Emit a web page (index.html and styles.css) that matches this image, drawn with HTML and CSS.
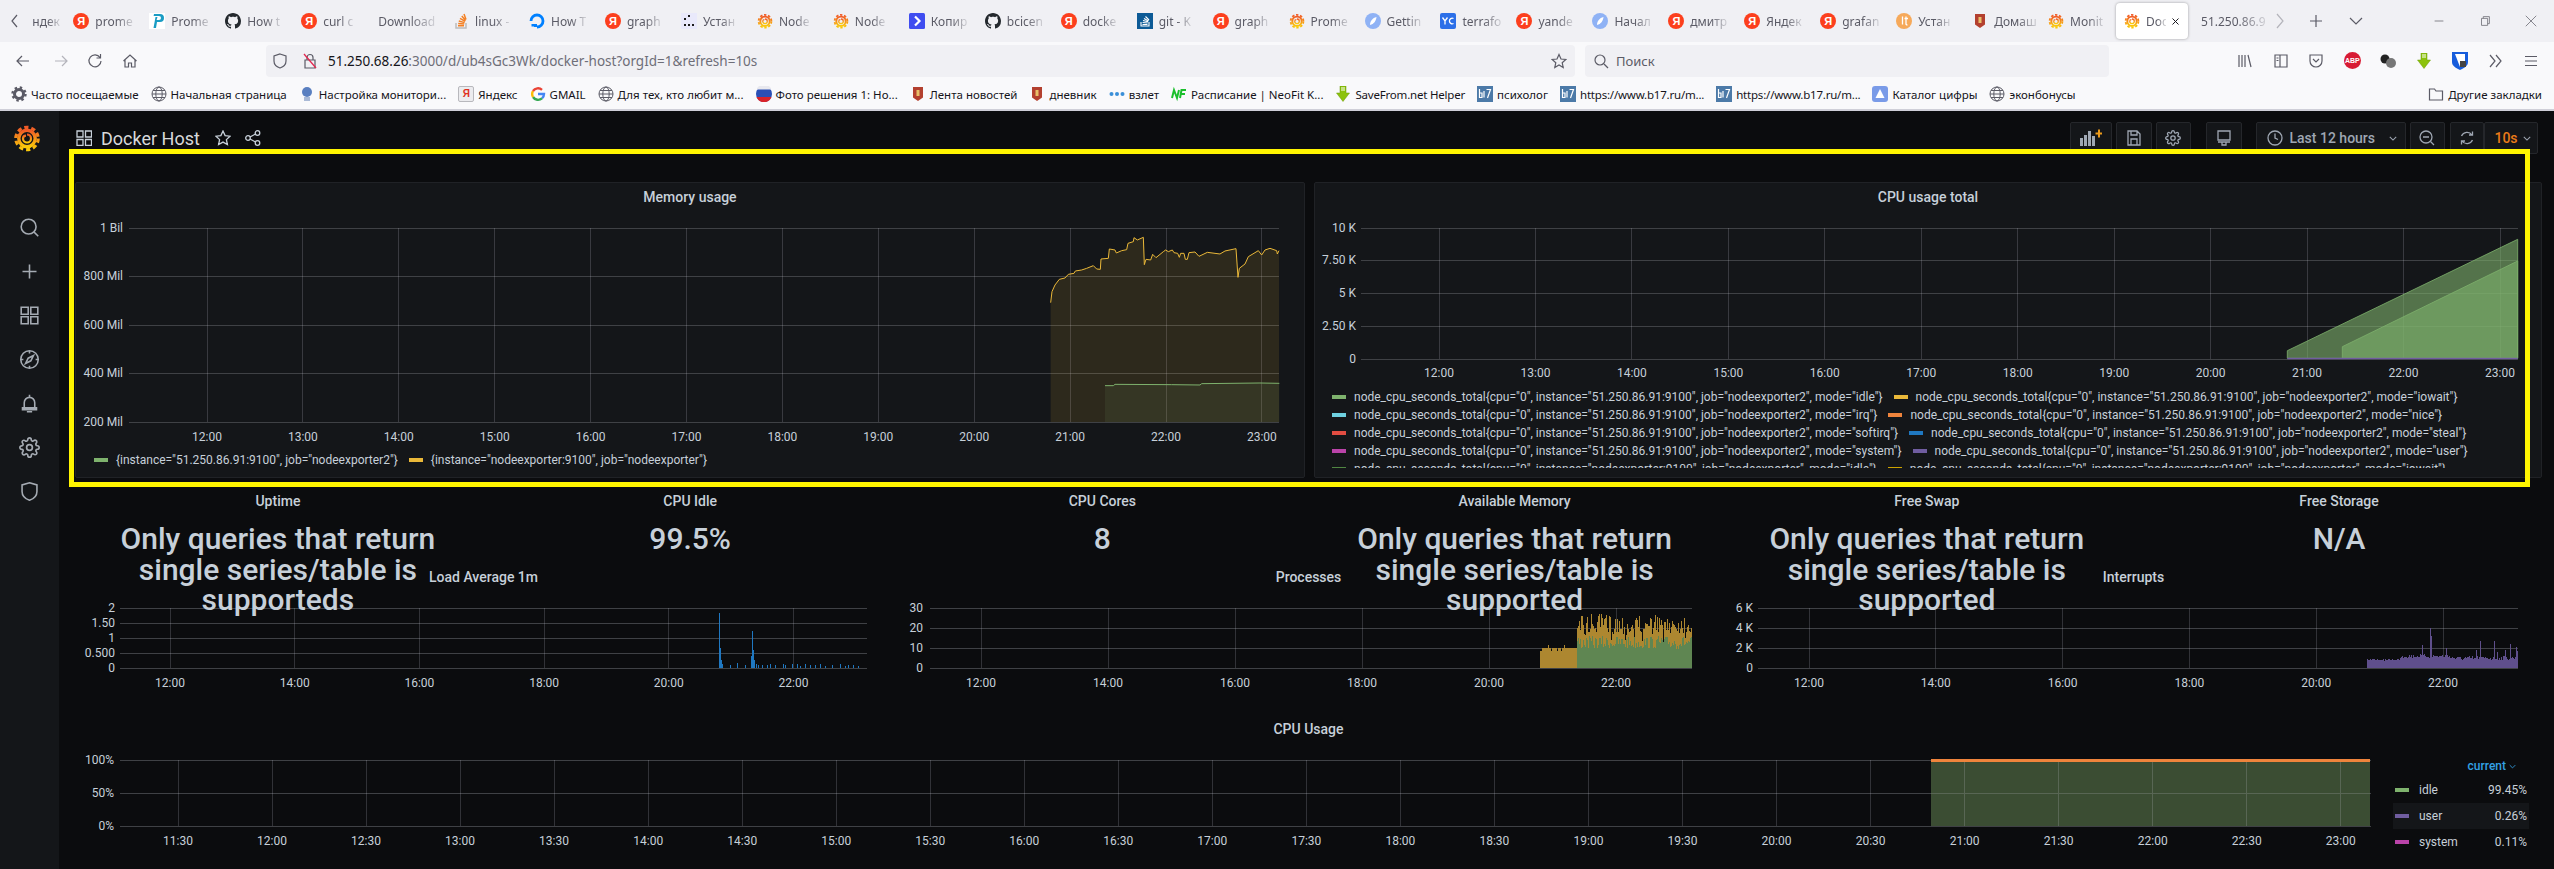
FILE: index.html
```html
<!DOCTYPE html>
<html lang="ru">
<head>
<meta charset="utf-8">
<title>Docker Host - Grafana</title>
<link rel="stylesheet" href="styles.css">
</head>
<body>
<svg class="defs" aria-hidden="true">
  <defs>
    <linearGradient id="gf" x1="0" y1="1" x2="0" y2="0"><stop offset="0" stop-color="#fbca0a"/><stop offset="1" stop-color="#f05a28"/></linearGradient>
    <symbol id="i-graf" viewBox="0 0 28 28">
      <circle cx="14" cy="14.5" r="11.2" fill="none" stroke="url(#gf)" stroke-width="3.2" stroke-dasharray="4.2 2.9"/>
      <circle cx="14" cy="14.5" r="8.2" fill="none" stroke="url(#gf)" stroke-width="3.4"/>
      <path d="M14 10.5a4 4 0 1 1-4 4.2 3 3 0 0 1 3-3" fill="none" stroke="url(#gf)" stroke-width="2.2"/>
    </symbol>
    <symbol id="i-gh" viewBox="0 0 16 16"><path fill="#24292e" d="M8 0C3.58 0 0 3.58 0 8c0 3.54 2.29 6.53 5.47 7.59.4.07.55-.17.55-.38 0-.19-.01-.82-.01-1.49-2.01.37-2.53-.49-2.69-.94-.09-.23-.48-.94-.82-1.13-.28-.15-.68-.52-.01-.53.63-.01 1.08.58 1.23.82.72 1.21 1.87.87 2.33.66.07-.52.28-.87.51-1.07-1.78-.2-3.64-.89-3.64-3.95 0-.87.31-1.59.82-2.15-.08-.2-.36-1.02.08-2.12 0 0 .67-.21 2.2.82.64-.18 1.32-.27 2-.27.68 0 1.36.09 2 .27 1.53-1.04 2.2-.82 2.2-.82.44 1.1.16 1.92.08 2.12.51.56.82 1.27.82 2.15 0 3.07-1.87 3.75-3.65 3.95.29.25.54.73.54 1.48 0 1.07-.01 1.93-.01 2.2 0 .21.15.46.55.38A8.013 8.013 0 0016 8c0-4.42-3.58-8-8-8z"/></symbol>
    <symbol id="i-pp" viewBox="0 0 16 16"><rect width="16" height="16" fill="#fff"/><path fill="#1a9cc4" d="M5 1h6a3.5 3.5 0 0 1 0 8H8l-1 6H4.500l2-11h2L7.600 7H10a1.500 1.500 0 0 0 0-4H4.600z"/></symbol>
    <symbol id="i-so" viewBox="0 0 16 16"><path fill="none" stroke="#bcbbbb" stroke-width="1.500" d="M3 10v5h10v-5"/><path fill="none" stroke="#f48024" stroke-width="1.500" d="M5 12.800h6M5.200 10.500l6 .6M5.800 8l5.800 1.600M7 5.400l5.200 3M8.800 3l3.800 4.400M11 1l2 5.400"/></symbol>
    <symbol id="i-sob" viewBox="0 0 16 16"><rect width="16" height="16" fill="#0c5a96"/><path fill="none" stroke="#fff" stroke-width="1.100" d="M4 9v4h8V9M5.500 11.500h5M5.600 9.500l5 .5M6 7.500l5 1.300M7 5.500l4.500 2.500M8.500 3.500l3.500 3.500"/></symbol>
    <symbol id="i-do" viewBox="0 0 16 16"><path fill="none" stroke="#0080ff" stroke-width="2.800" d="M8 14A6 6 0 1 0 2 8"/><path fill="#0080ff" d="M5 11h3v3H5zM2.500 11H5v2.500H2.500z"/></symbol>
    <symbol id="i-dots" viewBox="0 0 16 16"><rect width="16" height="16" fill="#e9e9fb"/><path fill="#1a1a1a" d="M3 5h2v2H3zM3 11h2v2H3zM7 11h2v2H7zM11 11h2v2h-2zM7 2h2v2H7z"/></symbol>
    <symbol id="i-kop" viewBox="0 0 16 16"><rect width="16" height="16" rx="1.500" fill="#3f4df0"/><path fill="none" stroke="#fff" stroke-width="2.200" d="M6 3.500L10.500 8 6 12.500"/></symbol>
    <symbol id="i-drop" viewBox="0 0 16 16"><circle cx="8" cy="8" r="8" fill="#8fb2f5"/><path fill="#fff" d="M5 12c0-4 2.500-7 6.500-8-.5 4-2.500 7-6.500 8z"/></symbol>
    <symbol id="i-yc" viewBox="0 0 16 16"><rect width="16" height="16" rx="2" fill="#2c6fe8"/><path fill="none" stroke="#fff" stroke-width="1.300" d="M2.500 4.500L5 8l2.500-3.500M5 8v3.500M13.500 5.500a2.800 2.800 0 1 0 0 5"/></symbol>
    <symbol id="i-lt" viewBox="0 0 16 16"><circle cx="8" cy="8" r="8" fill="#f6a95a"/><path fill="none" stroke="#fff" stroke-width="1.300" d="M6.500 3.500v8M8.500 5.500h3.500M10 3.500v7.500c0 .5.5 1 1.500.8"/></symbol>
    <symbol id="i-msk" viewBox="0 0 16 16"><path fill="#b3402f" d="M3 1h10v10.500L8 15l-5-3.500z"/><path fill="#e8c06a" d="M6.500 4h3v6h-3z"/></symbol>
    <symbol id="i-globe" viewBox="0 0 16 16"><g fill="none" stroke="#5b5b66" stroke-width="1"><circle cx="8" cy="8" r="7"/><ellipse cx="8" cy="8" rx="3.200" ry="7"/><path d="M1 8h14M2 4.500h12M2 11.500h12"/></g></symbol>
    <symbol id="i-b17" viewBox="0 0 16 16"><rect width="16" height="16" fill="#4c7aa8"/><path fill="none" stroke="#fff" stroke-width="1.200" d="M2.500 3v8.500h2.500V7H2.500M7 5v6.500M9.500 3.500H13.500L10.500 12"/></symbol>
    <symbol id="i-dn" viewBox="0 0 16 16"><path fill="#8cc20c" stroke="#6a9a06" stroke-width=".5" d="M5 0h6v7h3.500L8 15.500 1.500 7H5z"/><path fill="#fff" d="M6.500 1h1v4h-1zM8.500 1h1v4h-1z"/></symbol>
    <symbol id="i-fgear" viewBox="0 0 16 16"><circle cx="8" cy="8" r="4.500" fill="none" stroke="#5b5b66" stroke-width="3"/><circle cx="8" cy="8" r="6.500" fill="none" stroke="#5b5b66" stroke-width="2.400" stroke-dasharray="2.400 2.700"/></symbol>
    <symbol id="i-gear" viewBox="0 0 24 24"><g fill="none" stroke="currentColor" stroke-width="1.900" stroke-linejoin="round"><circle cx="12" cy="12" r="3.300"/><path d="M19.400 15a1.650 1.650 0 0 0 .33 1.820l.06.06a2 2 0 0 1 0 2.830 2 2 0 0 1-2.830 0l-.06-.06a1.650 1.650 0 0 0-1.820-.33 1.650 1.650 0 0 0-1 1.510V21a2 2 0 0 1-2 2 2 2 0 0 1-2-2v-.09A1.650 1.650 0 0 0 9 19.400a1.650 1.650 0 0 0-1.820.33l-.06.06a2 2 0 0 1-2.830 0 2 2 0 0 1 0-2.830l.06-.06a1.650 1.650 0 0 0 .33-1.820 1.650 1.650 0 0 0-1.510-1H3a2 2 0 0 1-2-2 2 2 0 0 1 2-2h.09A1.650 1.650 0 0 0 4.600 9a1.650 1.650 0 0 0-.33-1.820l-.06-.06a2 2 0 0 1 0-2.830 2 2 0 0 1 2.830 0l.06.06a1.650 1.650 0 0 0 1.820.33H9a1.650 1.650 0 0 0 1-1.510V3a2 2 0 0 1 2-2 2 2 0 0 1 2 2v.09a1.650 1.650 0 0 0 1 1.510 1.650 1.650 0 0 0 1.820-.33l.06-.06a2 2 0 0 1 2.830 0 2 2 0 0 1 0 2.830l-.06.06a1.650 1.650 0 0 0-.33 1.820V9a1.650 1.650 0 0 0 1.510 1H21a2 2 0 0 1 2 2 2 2 0 0 1-2 2h-.09a1.650 1.650 0 0 0-1.510 1z"/></g></symbol>
  </defs>
</svg>

<header class="tabbar">
  <span class="tab-back"><svg class="chrome-ico" viewBox="0 0 16 16"><path d="M10 2L5 8l5 6"/></svg></span>
  <div class="tab tab-first"><span class="tab-label">ндек</span></div>
  <div class="tab"><span class="fav fav-ya">Я</span><span class="tab-label">prome</span></div>
  <div class="tab"><svg class="fav"><use href="#i-pp"/></svg><span class="tab-label">Prome</span></div>
  <div class="tab"><svg class="fav"><use href="#i-gh"/></svg><span class="tab-label">How t</span></div>
  <div class="tab"><span class="fav fav-ya">Я</span><span class="tab-label">curl c</span></div>
  <div class="tab tab-noicon"><span class="tab-label">Download</span></div>
  <div class="tab"><svg class="fav"><use href="#i-so"/></svg><span class="tab-label">linux -</span></div>
  <div class="tab"><svg class="fav"><use href="#i-do"/></svg><span class="tab-label">How T</span></div>
  <div class="tab"><span class="fav fav-ya">Я</span><span class="tab-label">graph</span></div>
  <div class="tab"><svg class="fav"><use href="#i-dots"/></svg><span class="tab-label">Устан</span></div>
  <div class="tab"><svg class="fav"><use href="#i-graf"/></svg><span class="tab-label">Node</span></div>
  <div class="tab"><svg class="fav"><use href="#i-graf"/></svg><span class="tab-label">Node</span></div>
  <div class="tab"><svg class="fav"><use href="#i-kop"/></svg><span class="tab-label">Копир</span></div>
  <div class="tab"><svg class="fav"><use href="#i-gh"/></svg><span class="tab-label">bcicen</span></div>
  <div class="tab"><span class="fav fav-ya">Я</span><span class="tab-label">docke</span></div>
  <div class="tab"><svg class="fav"><use href="#i-sob"/></svg><span class="tab-label">git - K</span></div>
  <div class="tab"><span class="fav fav-ya">Я</span><span class="tab-label">graph</span></div>
  <div class="tab"><svg class="fav"><use href="#i-graf"/></svg><span class="tab-label">Prome</span></div>
  <div class="tab"><svg class="fav"><use href="#i-drop"/></svg><span class="tab-label">Gettin</span></div>
  <div class="tab"><svg class="fav"><use href="#i-yc"/></svg><span class="tab-label">terrafo</span></div>
  <div class="tab"><span class="fav fav-ya">Я</span><span class="tab-label">yande</span></div>
  <div class="tab"><svg class="fav"><use href="#i-drop"/></svg><span class="tab-label">Начал</span></div>
  <div class="tab"><span class="fav fav-ya">Я</span><span class="tab-label">дмитр</span></div>
  <div class="tab"><span class="fav fav-ya">Я</span><span class="tab-label">Яндек</span></div>
  <div class="tab"><span class="fav fav-ya">Я</span><span class="tab-label">grafan</span></div>
  <div class="tab"><svg class="fav"><use href="#i-lt"/></svg><span class="tab-label">Устан</span></div>
  <div class="tab"><svg class="fav"><use href="#i-msk"/></svg><span class="tab-label">Домаш</span></div>
  <div class="tab"><svg class="fav"><use href="#i-graf"/></svg><span class="tab-label">Monit</span></div>
  <div class="tab tab-active"><svg class="fav"><use href="#i-graf"/></svg><span class="tab-label tab-label-short">Doc</span><svg class="tab-close" viewBox="0 0 12 12"><path d="M2 2l8 8M10 2l-8 8"/></svg></div>
  <div class="tab tab-noicon tab-last"><span class="tab-label">51.250.86.9</span></div>
  <span class="tab-ctl tab-ctl-a"><svg class="chrome-ico chrome-faint" viewBox="0 0 16 16"><path d="M5 1l6 7-6 7"/></svg></span>
  <span class="tab-ctl tab-ctl-b"><svg class="chrome-ico" viewBox="0 0 16 16"><path d="M8 2v12M2 8h12"/></svg></span>
  <span class="tab-ctl tab-ctl-c"><svg class="chrome-ico" viewBox="0 0 16 16"><path d="M2 5l6 6 6-6"/></svg></span>
  <span class="win-ctl win-first"><svg class="chrome-ico chrome-win" viewBox="0 0 16 16"><path d="M3 8h10"/></svg></span>
  <span class="win-ctl"><svg class="chrome-ico chrome-win" viewBox="0 0 16 16"><path d="M4 5h7v8H4zM6 5V3h7v8h-2"/></svg></span>
  <span class="win-ctl"><svg class="chrome-ico chrome-win" viewBox="0 0 16 16"><path d="M2 2l12 12M14 2L2 14"/></svg></span>
</header>

<nav class="navbar">
  <svg class="chrome-ico nb-back" viewBox="0 0 16 16"><path d="M14 8H2M7 3L2 8l5 5"/></svg>
  <svg class="chrome-ico chrome-faint nb-fwd" viewBox="0 0 16 16"><path d="M2 8h12M9 3l5 5-5 5"/></svg>
  <svg class="chrome-ico nb-reload" viewBox="0 0 16 16"><path d="M13 4.500A6 6 0 1 0 14 8M13.500 1v4h-4"/></svg>
  <svg class="chrome-ico nb-home" viewBox="0 0 16 16"><path d="M1.500 8L8 2l6.500 6M3 7v7h3.500v-4h3v4H13V7"/></svg>
  <div class="urlbar">
    <svg class="chrome-ico url-shield" viewBox="0 0 16 16"><path d="M8 1l6 2v5c0 3.500-3 6-6 7-3-1-6-3.500-6-7V3z"/></svg>
    <svg class="url-lock" viewBox="0 0 16 16"><path fill="none" stroke="#5b5b66" stroke-width="1.200" d="M3 7h10v8H3zM5 7V4.500a3 3 0 0 1 6 0V7"/><path stroke="#e22850" stroke-width="1.300" d="M2 1l12 14"/></svg>
    <span class="url-text"><span class="url-host">51.250.68.26</span>:3000/d/ub4sGc3Wk/docker-host?orgId=1&amp;refresh=10s</span>
    <svg class="chrome-ico url-star" viewBox="0 0 16 16"><path d="M8 1.500l2 4.500 4.800.5-3.600 3.200 1 4.800L8 12l-4.200 2.500 1-4.800L1.200 6.500 6 6z"/></svg>
  </div>
  <div class="searchbar">
    <svg class="chrome-ico" viewBox="0 0 16 16"><circle cx="7" cy="7" r="5"/><path d="M11 11l4 4"/></svg>
    <span>Поиск</span>
  </div>
  <div class="nav-tools">
    <span class="nav-tool"><svg class="chrome-ico" viewBox="0 0 16 16"><path d="M2 2v12M5 2v12M8 2v12M11 2l3 12"/></svg></span>
    <span class="nav-tool"><svg class="chrome-ico" viewBox="0 0 16 16"><path d="M2 2h12v12H2zM7 2v12M3.500 5h2M3.500 7.500h2"/></svg></span>
    <span class="nav-tool"><svg class="chrome-ico" viewBox="0 0 16 16"><path d="M2 2h12v6a6 6 0 0 1-12 0zM5 6l3 3 3-3"/></svg></span>
    <span class="nav-tool"><span class="abp">ABP</span></span>
    <span class="nav-tool"><svg width="18" height="18" viewBox="0 0 18 18"><circle cx="6" cy="7" r="4.500" fill="#222"/><circle cx="12" cy="11" r="5" fill="#777"/></svg></span>
    <span class="nav-tool"><svg class="fav"><use href="#i-dn"/></svg></span>
    <span class="nav-tool"><svg width="16" height="18" viewBox="0 0 16 18"><path fill="#175ddc" d="M0 0h16v10c0 4-4 6-8 8-4-2-8-4-8-8z"/><path fill="#fff" d="M3 2h10v8c0 2-2.500 3.500-5 5z"/><rect x="8" y="9" width="6" height="6" fill="#444"/></svg></span>
    <span class="nav-tool"><svg class="chrome-ico" viewBox="0 0 16 16"><path d="M3 2l5 6-5 6M9 2l5 6-5 6"/></svg></span>
    <span class="nav-tool"><svg class="chrome-ico" viewBox="0 0 16 16"><path d="M2 3.500h12M2 8h12M2 12.500h12"/></svg></span>
  </div>
</nav>

<div class="bookbar">
  <a class="bm"><svg class="fav"><use href="#i-fgear"/></svg>Часто посещаемые</a>
  <a class="bm"><svg class="fav"><use href="#i-globe"/></svg>Начальная страница</a>
  <a class="bm"><svg class="fav" viewBox="0 0 16 16"><circle cx="8" cy="6" r="5" fill="#5a7fc0"/><path fill="#a9b9d6" d="M5 11h6v4H5z"/></svg>Настройка монитори...</a>
  <a class="bm"><span class="fav fav-yatag">Я</span>Яндекс</a>
  <a class="bm"><svg class="fav" viewBox="0 0 16 16"><path fill="none" stroke="#4285f4" stroke-width="2.400" d="M8 8h6a6 6 0 0 1-2 4.400"/><path fill="none" stroke="#34a853" stroke-width="2.400" d="M12 12.400A6 6 0 0 1 3 11"/><path fill="none" stroke="#fbbc05" stroke-width="2.400" d="M3 11a6 6 0 0 1 0-6"/><path fill="none" stroke="#ea4335" stroke-width="2.400" d="M3 5a6 6 0 0 1 9-1.200"/></svg>GMAIL</a>
  <a class="bm"><svg class="fav"><use href="#i-globe"/></svg>Для тех, кто любит м...</a>
  <a class="bm"><svg class="fav" viewBox="0 0 16 16"><circle cx="8" cy="8" r="8" fill="#2b4fb5"/><path fill="#e8e8ee" d="M1 3.500h14v-1a8 8 0 0 0-14 0z"/><path fill="#d8232a" d="M.500 11h15a8 8 0 0 1-15 0z"/></svg>Фото решения 1: Но...</a>
  <a class="bm"><svg class="fav"><use href="#i-msk"/></svg>Лента новостей</a>
  <a class="bm"><svg class="fav"><use href="#i-msk"/></svg>дневник</a>
  <a class="bm"><svg class="fav" viewBox="0 0 16 16"><g fill="#3a8fd8"><circle cx="2.500" cy="8" r="2"/><circle cx="8" cy="8" r="2"/><circle cx="13.500" cy="8" r="2"/></g></svg>взлет</a>
  <a class="bm"><svg class="fav" viewBox="0 0 16 16"><path fill="none" stroke="#1bbf2c" stroke-width="2" d="M1 12l2-8 3 8 2-8M9 12l1.500-8H15M10 8h4"/></svg>Расписание | NeoFit K...</a>
  <a class="bm bm-tight"><svg class="fav"><use href="#i-dn"/></svg>SaveFrom.net Helper</a>
  <a class="bm"><svg class="fav"><use href="#i-b17"/></svg>психолог</a>
  <a class="bm bm-tight"><svg class="fav"><use href="#i-b17"/></svg>https://www.b17.ru/m...</a>
  <a class="bm bm-tight"><svg class="fav"><use href="#i-b17"/></svg>https://www.b17.ru/m...</a>
  <a class="bm"><svg class="fav" viewBox="0 0 16 16"><rect width="16" height="16" rx="3" fill="#7a9be8"/><path fill="#fff" d="M8 3l4.500 9h-9z"/></svg>Каталог цифры</a>
  <a class="bm"><svg class="fav"><use href="#i-globe"/></svg>эконбонусы</a>
  <a class="bm bm-other"><svg class="chrome-ico" viewBox="0 0 16 16"><path d="M1.500 3h5l1.500 2h6.500v9h-13z"/></svg>Другие закладки</a>
</div>

<div class="app">
  <aside class="side">
    <svg class="side-logo"><use href="#i-graf"/></svg>
    <span class="side-item"><svg class="side-ico" viewBox="0 0 24 24"><circle cx="11" cy="11" r="8.500"/><path d="M17 17l5 5"/></svg></span>
    <span class="side-item"><svg class="side-ico" viewBox="0 0 24 24"><path d="M12 4v16M4 12h16"/></svg></span>
    <span class="side-item"><svg class="side-ico" viewBox="0 0 24 24"><path d="M2.500 2.500h8v8h-8zM13.500 2.500h8v8h-8zM2.500 13.500h8v8h-8zM13.500 13.500h8v8h-8z"/></svg></span>
    <span class="side-item"><svg class="side-ico" viewBox="0 0 24 24"><circle cx="12" cy="12" r="10"/><path d="M12 2v3M12 19v3M2 12h3M19 12h3M16.500 7.500l-3 6-6 3 3-6z"/></svg></span>
    <span class="side-item"><svg class="side-ico" viewBox="0 0 24 24"><path d="M12 2v2.500M6 17v-6a6 6 0 0 1 12 0v6M4 17h16v2H4zM9 21.500h6"/></svg></span>
    <span class="side-item"><svg class="side-ico"><use href="#i-gear"/></svg></span>
    <span class="side-item"><svg class="side-ico" viewBox="0 0 24 24"><path d="M12 2l8.500 2.500V12c0 5-4 8.500-8.500 10-4.500-1.500-8.500-5-8.500-10V4.500z"/></svg></span>
  </aside>

  <main class="main">
    <div class="topbar">
      <div class="dash-title">
        <svg class="title-ico" viewBox="0 0 16 16"><path d="M1 1h6v6H1zM9.500 1h6v6h-6zM1 9.500h6v6H1zM9.500 9.500h6v6h-6z"/></svg>
        <span class="title-text">Docker Host</span>
        <svg class="title-ico title-star" viewBox="0 0 16 16"><path d="M8 1l2.100 4.600 4.900.6-3.600 3.400 1 4.900L8 12.100l-4.400 2.400 1-4.900L1 6.200l4.900-.6z"/></svg>
        <svg class="title-ico title-share" viewBox="0 0 16 16"><circle cx="12.500" cy="3" r="2.300"/><circle cx="12.500" cy="13" r="2.300"/><circle cx="3" cy="8" r="2.300"/><path d="M5 7l5.500-3M5 9l5.500 3"/></svg>
      </div>
      <div class="toolbar">
        <span class="tbtn tbtn-add"><svg width="22" height="18" viewBox="0 0 22 18"><path fill="#9fa7b3" d="M0 9h3v8H0zM4 6h3v11H4zM8 2h3v15H8zM12 7h3v10h-3z"/><path fill="#eb9a1a" d="M15.500 3.500h2.500V0.500h2v3h2.500v2h-2.500v3h-2v-3h-2.500z"/></svg></span>
        <span class="tbtn"><svg class="tb-ico" viewBox="0 0 16 16"><path d="M2 1h9l3 3v11H2zM5 1v4h6V1M5 15V9h6v6"/></svg></span>
        <span class="tbtn tbtn-last"><svg class="tb-ico"><use href="#i-gear"/></svg></span>
        <span class="tbtn tbtn-last"><svg class="tb-ico" viewBox="0 0 16 16"><path d="M2 1h12v9H2zM2 12h12M6 12v3h4v-3"/></svg></span>
        <span class="tbtn tbtn-time"><svg class="tb-ico" viewBox="0 0 16 16"><circle cx="8" cy="8" r="7"/><path d="M8 3.500V8l3 1.500"/></svg><span class="time-text">Last 12 hours</span><svg class="tb-chev" viewBox="0 0 10 6"><path d="M1 1l4 4 4-4"/></svg></span>
        <span class="tbtn"><svg class="tb-ico" viewBox="0 0 16 16"><circle cx="7" cy="7" r="6"/><path d="M4 7h6M11.500 11.500l3.500 3.500"/></svg></span>
        <span class="tgroup">
          <span class="tbtn tbtn-ref"><svg class="tb-ico" viewBox="0 0 16 16"><path d="M13 5A6 6 0 0 0 2.500 6M3 11a6 6 0 0 0 10.500-1M13.500 1.500V5H10M2.500 14.500V11H6"/></svg></span>
          <span class="tbtn tbtn-int"><span class="int-text">10s</span><svg class="tb-chev" viewBox="0 0 10 6"><path d="M1 1l4 4 4-4"/></svg></span>
        </span>
      </div>
    </div>

    <section class="row row-top">
      <article class="panel">
        <h2 class="ptitle">Memory usage</h2>
        <svg class="plot plot-mem" viewBox="75 211 1230 236">
          <path class="grid-h" d="M129 228H1279M129 276H1279M129 325H1279M129 373H1279M129 422H1279"/>
          <path class="grid-v" d="M207 228V422M302.900 228V422M398.800 228V422M494.700 228V422M590.600 228V422M686.500 228V422M782.400 228V422M878.300 228V422M974.200 228V422M1070.100 228V422M1166 228V422M1261.900 228V422"/>
          <g transform="translate(1000 220) scale(.33333)">
            <path fill="#eab839" fill-opacity=".12" d="M152 248L156 215 165 195 178 178 195 174 205 163 222 160 226 153 245 150 260 145 280 137 290 147 301 148 303 117 325 115 328 87 345 90 349 99 365 92 380 89 384 70 400 65 402 53 412 60 430 52 433 134 438 118 452 120 458 103 468 113 490 95 497 90 505 95 517 90 522 98 533 100 538 112 542 100 552 100 556 118 562 118 567 98 585 96 597 109 622 97 660 102 675 93 708 86 714 172 718 145 735 132 745 110 775 92 785 105 795 90 810 85 830 92 832 102 837 92V606H152Z"/>
            <path class="line" stroke="#eab839" d="M152 248L156 215 165 195 178 178 195 174 205 163 222 160 226 153 245 150 260 145 280 137 290 147 301 148 303 117 325 115 328 87 345 90 349 99 365 92 380 89 384 70 400 65 402 53 412 60 430 52 433 134 438 118 452 120 458 103 468 113 490 95 497 90 505 95 517 90 522 98 533 100 538 112 542 100 552 100 556 118 562 118 567 98 585 96 597 109 622 97 660 102 675 93 708 86 714 172 718 145 735 132 745 110 775 92 785 105 795 90 810 85 830 92 832 102 837 92"/>
            <path fill="#7eb26d" fill-opacity=".1" d="M315 497H340L345 493 515 494 600 495 605 491 780 489 838 490V606H315Z"/>
            <path class="line" stroke="#7eb26d" d="M315 497H340L345 493 515 494 600 495 605 491 780 489 838 490"/>
          </g>
          <g class="yl"><text x="123" y="228">1 Bil</text><text x="123" y="276">800 Mil</text><text x="123" y="325">600 Mil</text><text x="123" y="373">400 Mil</text><text x="123" y="422">200 Mil</text></g>
          <g class="xl"><text x="207" y="437">12:00</text><text x="302.900" y="437">13:00</text><text x="398.800" y="437">14:00</text><text x="494.700" y="437">15:00</text><text x="590.600" y="437">16:00</text><text x="686.500" y="437">17:00</text><text x="782.400" y="437">18:00</text><text x="878.300" y="437">19:00</text><text x="974.200" y="437">20:00</text><text x="1070.100" y="437">21:00</text><text x="1166" y="437">22:00</text><text x="1261.900" y="437">23:00</text></g>
        </svg>
        <ul class="legend legend-mem">
          <li class="lg"><i class="sw sw-green"></i>{instance="51.250.86.91:9100", job="nodeexporter2"}</li>
          <li class="lg"><i class="sw sw-yellow"></i>{instance="nodeexporter:9100", job="nodeexporter"}</li>
        </ul>
      </article>
      <article class="panel">
        <h2 class="ptitle">CPU usage total</h2>
        <svg class="plot plot-cpu" viewBox="1314 211 1228 174">
          <path class="grid-h" d="M1361 228H2518M1361 260H2518M1361 293H2518M1361 326H2518M1361 359H2518"/>
          <path class="grid-v" d="M1439 228V359M1535.500 228V359M1631.900 228V359M1728.400 228V359M1824.800 228V359M1921.300 228V359M2017.700 228V359M2114.200 228V359M2210.600 228V359M2307 228V359M2403.500 228V359M2500 228V359"/>
          <path class="cpu-area" d="M2287.300 350.700L2517.700 239.300V358.300H2287.300Z"/>
          <path class="cpu-area" d="M2342.300 346.700L2517.700 261V358.300H2342.300Z"/>
          <path class="cpu-base" d="M2287.300 358.500H2517.700"/>
          <g class="yl"><text x="1356" y="228">10 K</text><text x="1356" y="260">7.50 K</text><text x="1356" y="293">5 K</text><text x="1356" y="326">2.50 K</text><text x="1356" y="359">0</text></g>
          <g class="xl"><text x="1439" y="373">12:00</text><text x="1535.500" y="373">13:00</text><text x="1631.900" y="373">14:00</text><text x="1728.400" y="373">15:00</text><text x="1824.800" y="373">16:00</text><text x="1921.300" y="373">17:00</text><text x="2017.700" y="373">18:00</text><text x="2114.200" y="373">19:00</text><text x="2210.600" y="373">20:00</text><text x="2307" y="373">21:00</text><text x="2403.500" y="373">22:00</text><text x="2500" y="373">23:00</text></g>
        </svg>
        <ul class="legend legend-cpu">
          <li class="lg"><i class="sw sw-green"></i>node_cpu_seconds_total{cpu="0", instance="51.250.86.91:9100", job="nodeexporter2", mode="idle"}</li>
          <li class="lg"><i class="sw sw-yellow"></i>node_cpu_seconds_total{cpu="0", instance="51.250.86.91:9100", job="nodeexporter2", mode="iowait"}</li>
          <li class="lg"><i class="sw sw-cyan"></i>node_cpu_seconds_total{cpu="0", instance="51.250.86.91:9100", job="nodeexporter2", mode="irq"}</li>
          <li class="lg"><i class="sw sw-orange"></i>node_cpu_seconds_total{cpu="0", instance="51.250.86.91:9100", job="nodeexporter2", mode="nice"}</li>
          <li class="lg"><i class="sw sw-red"></i>node_cpu_seconds_total{cpu="0", instance="51.250.86.91:9100", job="nodeexporter2", mode="softirq"}</li>
          <li class="lg"><i class="sw sw-blue"></i>node_cpu_seconds_total{cpu="0", instance="51.250.86.91:9100", job="nodeexporter2", mode="steal"}</li>
          <li class="lg"><i class="sw sw-pink"></i>node_cpu_seconds_total{cpu="0", instance="51.250.86.91:9100", job="nodeexporter2", mode="system"}</li>
          <li class="lg"><i class="sw sw-purple"></i>node_cpu_seconds_total{cpu="0", instance="51.250.86.91:9100", job="nodeexporter2", mode="user"}</li>
          <li class="lg"><i class="sw sw-dgreen"></i>node_cpu_seconds_total{cpu="0", instance="nodeexporter:9100", job="nodeexporter", mode="idle"}</li>
          <li class="lg"><i class="sw sw-dyellow"></i>node_cpu_seconds_total{cpu="0", instance="nodeexporter:9100", job="nodeexporter", mode="iowait"}</li>
        </ul>
      </article>
    </section>

    <section class="row row-stats">
      <article class="stat"><h2 class="ptitle">Uptime</h2><p class="stat-val">Only queries that return single series/table is supporteds</p></article>
      <article class="stat"><h2 class="ptitle">CPU Idle</h2><p class="stat-val">99.5%</p></article>
      <article class="stat"><h2 class="ptitle">CPU Cores</h2><p class="stat-val">8</p></article>
      <article class="stat"><h2 class="ptitle">Available Memory</h2><p class="stat-val">Only queries that return single series/table is supported</p></article>
      <article class="stat"><h2 class="ptitle">Free Swap</h2><p class="stat-val">Only queries that return single series/table is supported</p></article>
      <article class="stat"><h2 class="ptitle">Free Storage</h2><p class="stat-val">N/A</p></article>
    </section>

    <section class="row row-mini">
      <article class="mini">
        <h2 class="ptitle">Load Average 1m</h2>
        <svg class="plot plot-mini" viewBox="75 591 817 110">
          <path class="grid-h" d="M120 608H867M120 623H867M120 638H867M120 653H867M120 668H867"/>
          <path class="grid-v" d="M170 608V668M294.700 608V668M419.400 608V668M544.100 608V668M668.800 608V668M793.500 608V668"/>
          <path class="spikes" d="M719 668V612.700M720 668V648M721 668V660M722 668V664M730 668V665M737 668V663M745 668V665M751 668V656M752 668V630.700M753 668V650M754 668V660M756 668V664M758 668V665M762 668V665M767 668V665M770 668V664M775 668V665M783 668V664M785 668V665M792 668V664M797 668V664M800 668V666M805 668V664M810 668V665M815 668V665M820 668V664M825 668V666M832 668V665M840 668V664M845 668V666M848 668V665M853 668V665M858 668V666"/>
          <g class="yl"><text x="115" y="608">2</text><text x="115" y="623">1.50</text><text x="115" y="638">1</text><text x="115" y="653">0.500</text><text x="115" y="668">0</text></g>
          <g class="xl"><text x="170" y="683">12:00</text><text x="294.700" y="683">14:00</text><text x="419.400" y="683">16:00</text><text x="544.100" y="683">18:00</text><text x="668.800" y="683">20:00</text><text x="793.500" y="683">22:00</text></g>
        </svg>
      </article>
      <article class="mini">
        <h2 class="ptitle">Processes</h2>
        <svg class="plot plot-mini" viewBox="900 591 817 110">
          <path class="grid-h" d="M929.500 608H1692M929.500 628H1692M929.500 648H1692M929.500 668H1692"/>
          <path class="grid-v" d="M981 608V668M1108 608V668M1235 608V668M1362 608V668M1489 608V668M1616 608V668"/>
          <path id="proc-orange" class="bars bars-orange"/>
          <path id="proc-green" class="bars bars-green"/>
          <g class="yl"><text x="923" y="608">30</text><text x="923" y="628">20</text><text x="923" y="648">10</text><text x="923" y="668">0</text></g>
          <g class="xl"><text x="981" y="683">12:00</text><text x="1108" y="683">14:00</text><text x="1235" y="683">16:00</text><text x="1362" y="683">18:00</text><text x="1489" y="683">20:00</text><text x="1616" y="683">22:00</text></g>
        </svg>
      </article>
      <article class="mini">
        <h2 class="ptitle">Interrupts</h2>
        <svg class="plot plot-mini" viewBox="1725 591 817 110">
          <path class="grid-h" d="M1758 608H2518M1758 628H2518M1758 648H2518M1758 668H2518"/>
          <path class="grid-v" d="M1809 608V668M1935.800 608V668M2062.600 608V668M2189.400 608V668M2316.200 608V668M2443 608V668"/>
          <path id="intr" class="bars bars-purple"/>
          <g class="yl"><text x="1753" y="608">6 K</text><text x="1753" y="628">4 K</text><text x="1753" y="648">2 K</text><text x="1753" y="668">0</text></g>
          <g class="xl"><text x="1809" y="683">12:00</text><text x="1935.800" y="683">14:00</text><text x="2062.600" y="683">16:00</text><text x="2189.400" y="683">18:00</text><text x="2316.200" y="683">20:00</text><text x="2443" y="683">22:00</text></g>
        </svg>
      </article>
    </section>

    <section class="row-usage">
      <h2 class="ptitle">CPU Usage</h2>
      <div class="usage-body">
        <svg class="plot plot-usage" viewBox="75 743 2316 112">
          <path class="grid-h" d="M120 760H2371M120 793H2371M120 826H2371"/>
          <path class="grid-v" d="M178 760V826M272 760V826M366 760V826M460 760V826M554 760V826M648.200 760V826M742.200 760V826M836.200 760V826M930.200 760V826M1024.300 760V826M1118.300 760V826M1212.300 760V826M1306.400 760V826M1400.400 760V826M1494.400 760V826M1588.500 760V826M1682.500 760V826M1776.500 760V826M1870.600 760V826M1964.600 760V826M2058.600 760V826M2152.700 760V826M2246.700 760V826M2340.700 760V826"/>
          <path class="usage-fill" d="M1931 761H2370V826H1931Z"/>
          <path class="grid-v" d="M1964.600 761V826M2058.600 761V826M2152.700 761V826M2246.700 761V826M2340.700 761V826M1931 793H2370"/>
          <path class="usage-top" d="M1931 760.500H2370"/>
          <g class="yl"><text x="114" y="760">100%</text><text x="114" y="793">50%</text><text x="114" y="826">0%</text></g>
          <g class="xl"><text x="178" y="841">11:30</text><text x="272" y="841">12:00</text><text x="366" y="841">12:30</text><text x="460" y="841">13:00</text><text x="554" y="841">13:30</text><text x="648.200" y="841">14:00</text><text x="742.200" y="841">14:30</text><text x="836.200" y="841">15:00</text><text x="930.200" y="841">15:30</text><text x="1024.300" y="841">16:00</text><text x="1118.300" y="841">16:30</text><text x="1212.300" y="841">17:00</text><text x="1306.400" y="841">17:30</text><text x="1400.400" y="841">18:00</text><text x="1494.400" y="841">18:30</text><text x="1588.500" y="841">19:00</text><text x="1682.500" y="841">19:30</text><text x="1776.500" y="841">20:00</text><text x="1870.600" y="841">20:30</text><text x="1964.600" y="841">21:00</text><text x="2058.600" y="841">21:30</text><text x="2152.700" y="841">22:00</text><text x="2246.700" y="841">22:30</text><text x="2340.700" y="841">23:00</text></g>
        </svg>
        <div class="usage-legend">
          <div class="ul-head">current <svg class="ul-chev" viewBox="0 0 10 6"><path d="M1 1l4 4 4-4"/></svg></div>
          <div class="ul-row"><i class="sw sw-green"></i><span class="ul-name">idle</span><span class="ul-val">99.45%</span></div>
          <div class="ul-row ul-hover"><i class="sw sw-purple"></i><span class="ul-name">user</span><span class="ul-val">0.26%</span></div>
          <div class="ul-row"><i class="sw sw-pink"></i><span class="ul-name">system</span><span class="ul-val">0.11%</span></div>
        </div>
      </div>
    </section>
  </main>
</div>
<div class="highlight"></div>
<script src="series.js"></script>
</body>
</html>
```

FILE: styles.css
```css
* { box-sizing: border-box; }
html, body { margin: 0; padding: 0; }
body {
  width: 2554px;
  height: 869px;
  overflow: hidden;
  background: #0b0c0e;
  font-family: Roboto, "Liberation Sans", sans-serif;
  color: #c7d0d9;
  position: relative;
}
.defs { display: block; width: 0; height: 0; }

/* browser chrome */
.chrome-ico { width: 16px; height: 16px; flex: none; fill: none; stroke: #5b5b66; stroke-width: 1.2; }
.chrome-faint { stroke: #b4b4bb; }
.chrome-win { width: 14px; height: 14px; stroke: #77777f; stroke-width: 1; }

.tabbar {
  height: 42px;
  background: #f0f0f4;
  display: flex;
  align-items: center;
  font-family: "Noto Sans", sans-serif;
  font-size: 12px;
  color: #5b5b66;
}
.tab-back { width: 24px; padding-left: 7px; display: flex; }
.tab {
  flex: 0 0 75.96px;
  height: 36px;
  display: flex;
  align-items: center;
  gap: 6px;
  padding-left: 10px;
}
.tab-first { flex-basis: 40px; padding-left: 9px; }
.tab-noicon { padding-left: 11px; }
.tab-label {
  width: max-content;
  flex: none;
  white-space: nowrap;
  -webkit-mask-image: linear-gradient(90deg, #000 55%, rgba(0, 0, 0, .2));
  mask-image: linear-gradient(90deg, #000 55%, rgba(0, 0, 0, .2));
}
.tab-active {
  flex-basis: 72px;
  margin: 0 2px;
  padding-left: 8px;
  background: #fff;
  border-radius: 4px;
  box-shadow: 0 0 3px rgba(0, 0, 0, .35);
  gap: 6px;
}
.tab-label-short { width: 20px; }
.tab-close { width: 9px; height: 9px; flex: none; fill: none; stroke: #15141a; stroke-width: 1.3; margin-left: -1px; }
.tab-ctl { display: flex; justify-content: center; flex: none; }
.tab-ctl-a { width: 28px; }
.tab-ctl-b { width: 44px; }
.tab-ctl-c { width: 36px; }
.win-ctl { width: 46px; display: flex; justify-content: center; flex: none; }
.win-first { margin-left: 42px; }
.fav { width: 16px; height: 16px; flex: none; display: block; }
.fav-ya {
  border-radius: 50%;
  background: #fc3f1d;
  color: #fff;
  font: 700 11px/16px "Liberation Sans", sans-serif;
  text-align: center;
}
.fav-yatag {
  border-radius: 2px;
  background: #ececef;
  border: 1px solid #b8b8bd;
  color: #e0301e;
  font: 700 10px/14px "Liberation Sans", sans-serif;
  text-align: center;
}

.navbar {
  height: 37px;
  background: #f9f9fb;
  display: flex;
  align-items: center;
  padding-left: 15px;
  font-family: "Noto Sans", sans-serif;
  font-size: 13px;
}
.nb-back { margin-right: 22px; }
.nb-fwd { margin-right: 18px; }
.nb-reload { margin-right: 19px; }
.urlbar {
  margin-left: 128px;
  width: 1309px;
  height: 32px;
  background: #f0f0f4;
  border-radius: 4px;
  display: flex;
  align-items: center;
  padding: 0 8px 0 6px;
  color: #6e6e78;
  font-size: 13.5px;
}
.url-lock { width: 16px; height: 16px; margin-left: 14px; flex: none; }
.url-text { margin-left: 10px; flex: 1; white-space: nowrap; }
.url-host { color: #15141a; }
.searchbar {
  margin-left: 10px;
  width: 524px;
  height: 32px;
  background: #f0f0f4;
  border-radius: 4px;
  display: flex;
  align-items: center;
  gap: 7px;
  padding-left: 8px;
  color: #5b5b66;
}
.nav-tools { margin-left: 118px; display: flex; }
.nav-tool { flex: 0 0 35.8px; display: flex; justify-content: center; align-items: center; }
.abp {
  width: 17px;
  height: 17px;
  border-radius: 50%;
  background: #d81b34;
  color: #fff;
  font: 700 7px/17px "Liberation Sans", sans-serif;
  text-align: center;
}

.bookbar {
  height: 32px;
  background: #f9f9fb;
  border-bottom: 2px solid #cfcfd8;
  display: flex;
  align-items: center;
  gap: 12px;
  padding-left: 11px;
  font-family: "Noto Sans", sans-serif;
  font-size: 11.5px;
  color: #15141a;
  white-space: nowrap;
}
.bm { display: flex; align-items: center; gap: 4px; }
.bm-tight { letter-spacing: -.2px; }
.bm-other { margin-left: auto; margin-right: 12px; }

/* grafana shell */
.app { display: flex; height: 758px; }
.side {
  width: 59px;
  flex: none;
  background: #141619;
  display: flex;
  flex-direction: column;
  align-items: center;
  padding-top: 13px;
}
.side-logo { width: 28px; height: 28px; margin: 0 0 53px -6px; flex: none; }
.side-item { height: 44px; display: flex; align-items: center; justify-content: center; flex: none; }
.side-ico { width: 21px; height: 21px; fill: none; stroke: #a5abb3; stroke-width: 1.8; color: #a5abb3; }
.main { flex: 1; min-width: 0; padding: 11px 12px 0 16px; }

.topbar { display: flex; justify-content: space-between; height: 32px; margin-right: 4px; }
.dash-title { display: flex; align-items: center; padding-left: 1px; }
.title-ico { width: 16px; height: 16px; fill: none; stroke: #c7d0d9; stroke-width: 1.3; flex: none; }
.title-text { font-size: 18px; margin-left: 9px; color: #d8d9da; white-space: nowrap; }
.title-star { margin-left: 15px; }
.title-share { margin-left: 14px; }
.toolbar { display: flex; }
.tbtn {
  height: 32px;
  width: 35.5px;
  background: #141619;
  border: 1px solid #25272b;
  border-radius: 2px;
  display: flex;
  align-items: center;
  justify-content: center;
  margin-left: 4px;
  flex: none;
}
.tbtn-add { width: 42px; margin-left: 0; }
.tbtn-last + .tbtn-last { margin-left: 15px; }
.tbtn-time { width: 150px; margin-left: 14px; justify-content: flex-start; padding-left: 10px; }
.tb-ico { width: 16px; height: 16px; fill: none; stroke: #9fa7b3; stroke-width: 1.3; color: #9fa7b3; }
.tb-chev { width: 8px; height: 5px; fill: none; stroke: #9fa7b3; stroke-width: 1.3; }
.time-text { font-size: 14px; font-weight: 500; color: #9fa7b3; margin: 0 14px 0 7px; white-space: nowrap; }
.tgroup { display: flex; margin-left: 5px; }
.tbtn-ref { margin: 0; width: 34px; }
.tbtn-int { margin: 0; width: 54px; gap: 5px; padding-left: 3px; }
.int-text { font-size: 14px; font-weight: 500; color: #eb7b18; }

.row { display: grid; }
.row-top { grid-template-columns: 1230px 1228px; gap: 9px; margin-top: 29px; height: 295px; }
.panel { background: #141619; border: 1px solid #202226; border-radius: 2px; overflow: hidden; margin: -1px 0 0; height: 296px; }
.ptitle { margin: 0; height: 28px; font-size: 14px; font-weight: 500; line-height: 28px; text-align: center; color: #c7d0d9; white-space: nowrap; }
.plot { display: block; overflow: visible; font-size: 12px; }
.plot-mem { width: 1230px; height: 236px; margin-left: -1px; }
.plot-cpu { width: 1228px; height: 174px; margin-left: -1px; }
.plot-mini { width: 817px; height: 110px; }
.plot-usage { width: 2316px; height: 112px; flex: none; }
.grid-h { stroke: #3f4145; stroke-width: 1; fill: none; shape-rendering: crispEdges; }
.grid-v { stroke: rgba(204, 204, 220, .2); stroke-width: 1; fill: none; shape-rendering: crispEdges; }
.yl text { fill: #c7d0d9; text-anchor: end; dominant-baseline: central; }
.xl text { fill: #c7d0d9; text-anchor: middle; dominant-baseline: central; }
.line { fill: none; stroke-width: 1; vector-effect: non-scaling-stroke; }
.cpu-area { fill: #7eb26d; fill-opacity: .6; stroke: #7eb26d; stroke-width: 1; stroke-opacity: .8; }
.cpu-base { stroke: #705da0; stroke-width: 1.6; fill: none; }
.spikes { stroke: #1f78c1; stroke-width: 1; fill: none; shape-rendering: crispEdges; }
.bars { stroke: none; shape-rendering: crispEdges; }
.bars-orange { fill: #ad8730; }
.bars-green { fill: #5f8652; }
.bars-purple { fill: #5f4f8c; }
.usage-fill { fill: #3b4d33; }
.usage-top { stroke: #ef843c; stroke-width: 3; fill: none; shape-rendering: crispEdges; }

.legend { list-style: none; margin: 0; display: flex; flex-wrap: wrap; align-content: flex-start; font-size: 12px; color: #c7d0d9; }
.legend-mem { padding: 4px 0 0 18px; line-height: 18px; height: 31px; }
.legend-cpu { padding: 3px 0 0 17px; height: 83px; overflow: hidden; line-height: 18px; }
.lg { display: flex; align-items: center; margin-right: 11px; white-space: nowrap; }
.sw { width: 14px; height: 4px; flex: none; margin-right: 8px; display: block; }
.sw-green { background: #7eb26d; }
.sw-yellow { background: #eab839; }
.sw-cyan { background: #6ed0e0; }
.sw-orange { background: #ef843c; }
.sw-red { background: #e24d42; }
.sw-blue { background: #1f78c1; }
.sw-pink { background: #ba43a9; }
.sw-purple { background: #705da0; }
.sw-dgreen { background: #508642; }
.sw-dyellow { background: #cca300; }

.row-stats { grid-template-columns: repeat(6, 1fr); gap: 6.4px; margin-top: 9px; height: 76px; position: relative; z-index: 1; }
.stat { min-width: 0; }
.stat-val {
  margin: 9px auto 0;
  width: 340px;
  font-size: 30px;
  font-weight: 500;
  line-height: 30.5px;
  text-align: center;
  color: #c7d0d9;
}
.row-mini { grid-template-columns: repeat(3, 817px); gap: 8px; height: 152px; }
.row-usage { height: 140px; }
.usage-body { display: flex; }
.usage-legend { width: 136px; margin-left: 2px; padding-top: 12px; font-size: 12px; }
.ul-head { height: 22px; display: flex; align-items: center; justify-content: flex-end; padding-right: 13px; gap: 3px; color: #33a2e5; font-weight: 500; }
.ul-chev { width: 7px; height: 5px; fill: none; stroke: #33a2e5; stroke-width: 1.2; }
.ul-row { height: 26px; display: flex; align-items: center; padding: 0 2px; }
.ul-hover { background: #141619; }
.ul-row .sw { margin-right: 10px; }
.ul-name { flex: 1; }

/* annotation rectangle drawn on top of the screenshot */
.highlight {
  position: absolute;
  left: 69px;
  top: 149px;
  width: 2461px;
  height: 338px;
  border: 5px solid #fff500;
  pointer-events: none;
  z-index: 5;
}
```

FILE: series.js
```js
// Draws the dense step series of the Processes and Interrupts graphs.
(function () {
  var seed = 7;
  function rnd() {
    seed = (seed * 16807) % 2147483647;
    return seed / 2147483647;
  }
  function bars(x0, x1, base, topFn) {
    var d = 'M' + x0 + ' ' + base;
    for (var x = x0; x <= x1; x++) {
      d += 'V' + topFn(x).toFixed(1) + 'H' + (x + 1);
    }
    return d + 'V' + base + 'Z';
  }
  document.getElementById('proc-orange').setAttribute('d', bars(1540, 1691, 668, function (x) {
    if (x < 1577) return 648 + (rnd() < 0.3 ? 3 : 0) - (rnd() < 0.08 ? 3 : 0);
    return 614 + rnd() * 20 + (rnd() < 0.2 ? 8 : 0);
  }));
  document.getElementById('proc-green').setAttribute('d', bars(1577, 1691, 668, function () {
    return 636 + rnd() * 13;
  }));
  var spikes = { 2430: 628, 2431: 636, 2422: 645, 2446: 648, 2476: 650, 2480: 641, 2494: 641, 2497: 652, 2505: 650, 2510: 644, 2516: 647, 2517: 651 };
  document.getElementById('intr').setAttribute('d', bars(2367, 2517, 668, function (x) {
    if (spikes[x]) return spikes[x];
    if (x < 2400) return 659 + rnd() * 1.5;
    return 653 + (x > 2450 ? 3 : 1) + rnd() * 4;
  }));
})();
```
